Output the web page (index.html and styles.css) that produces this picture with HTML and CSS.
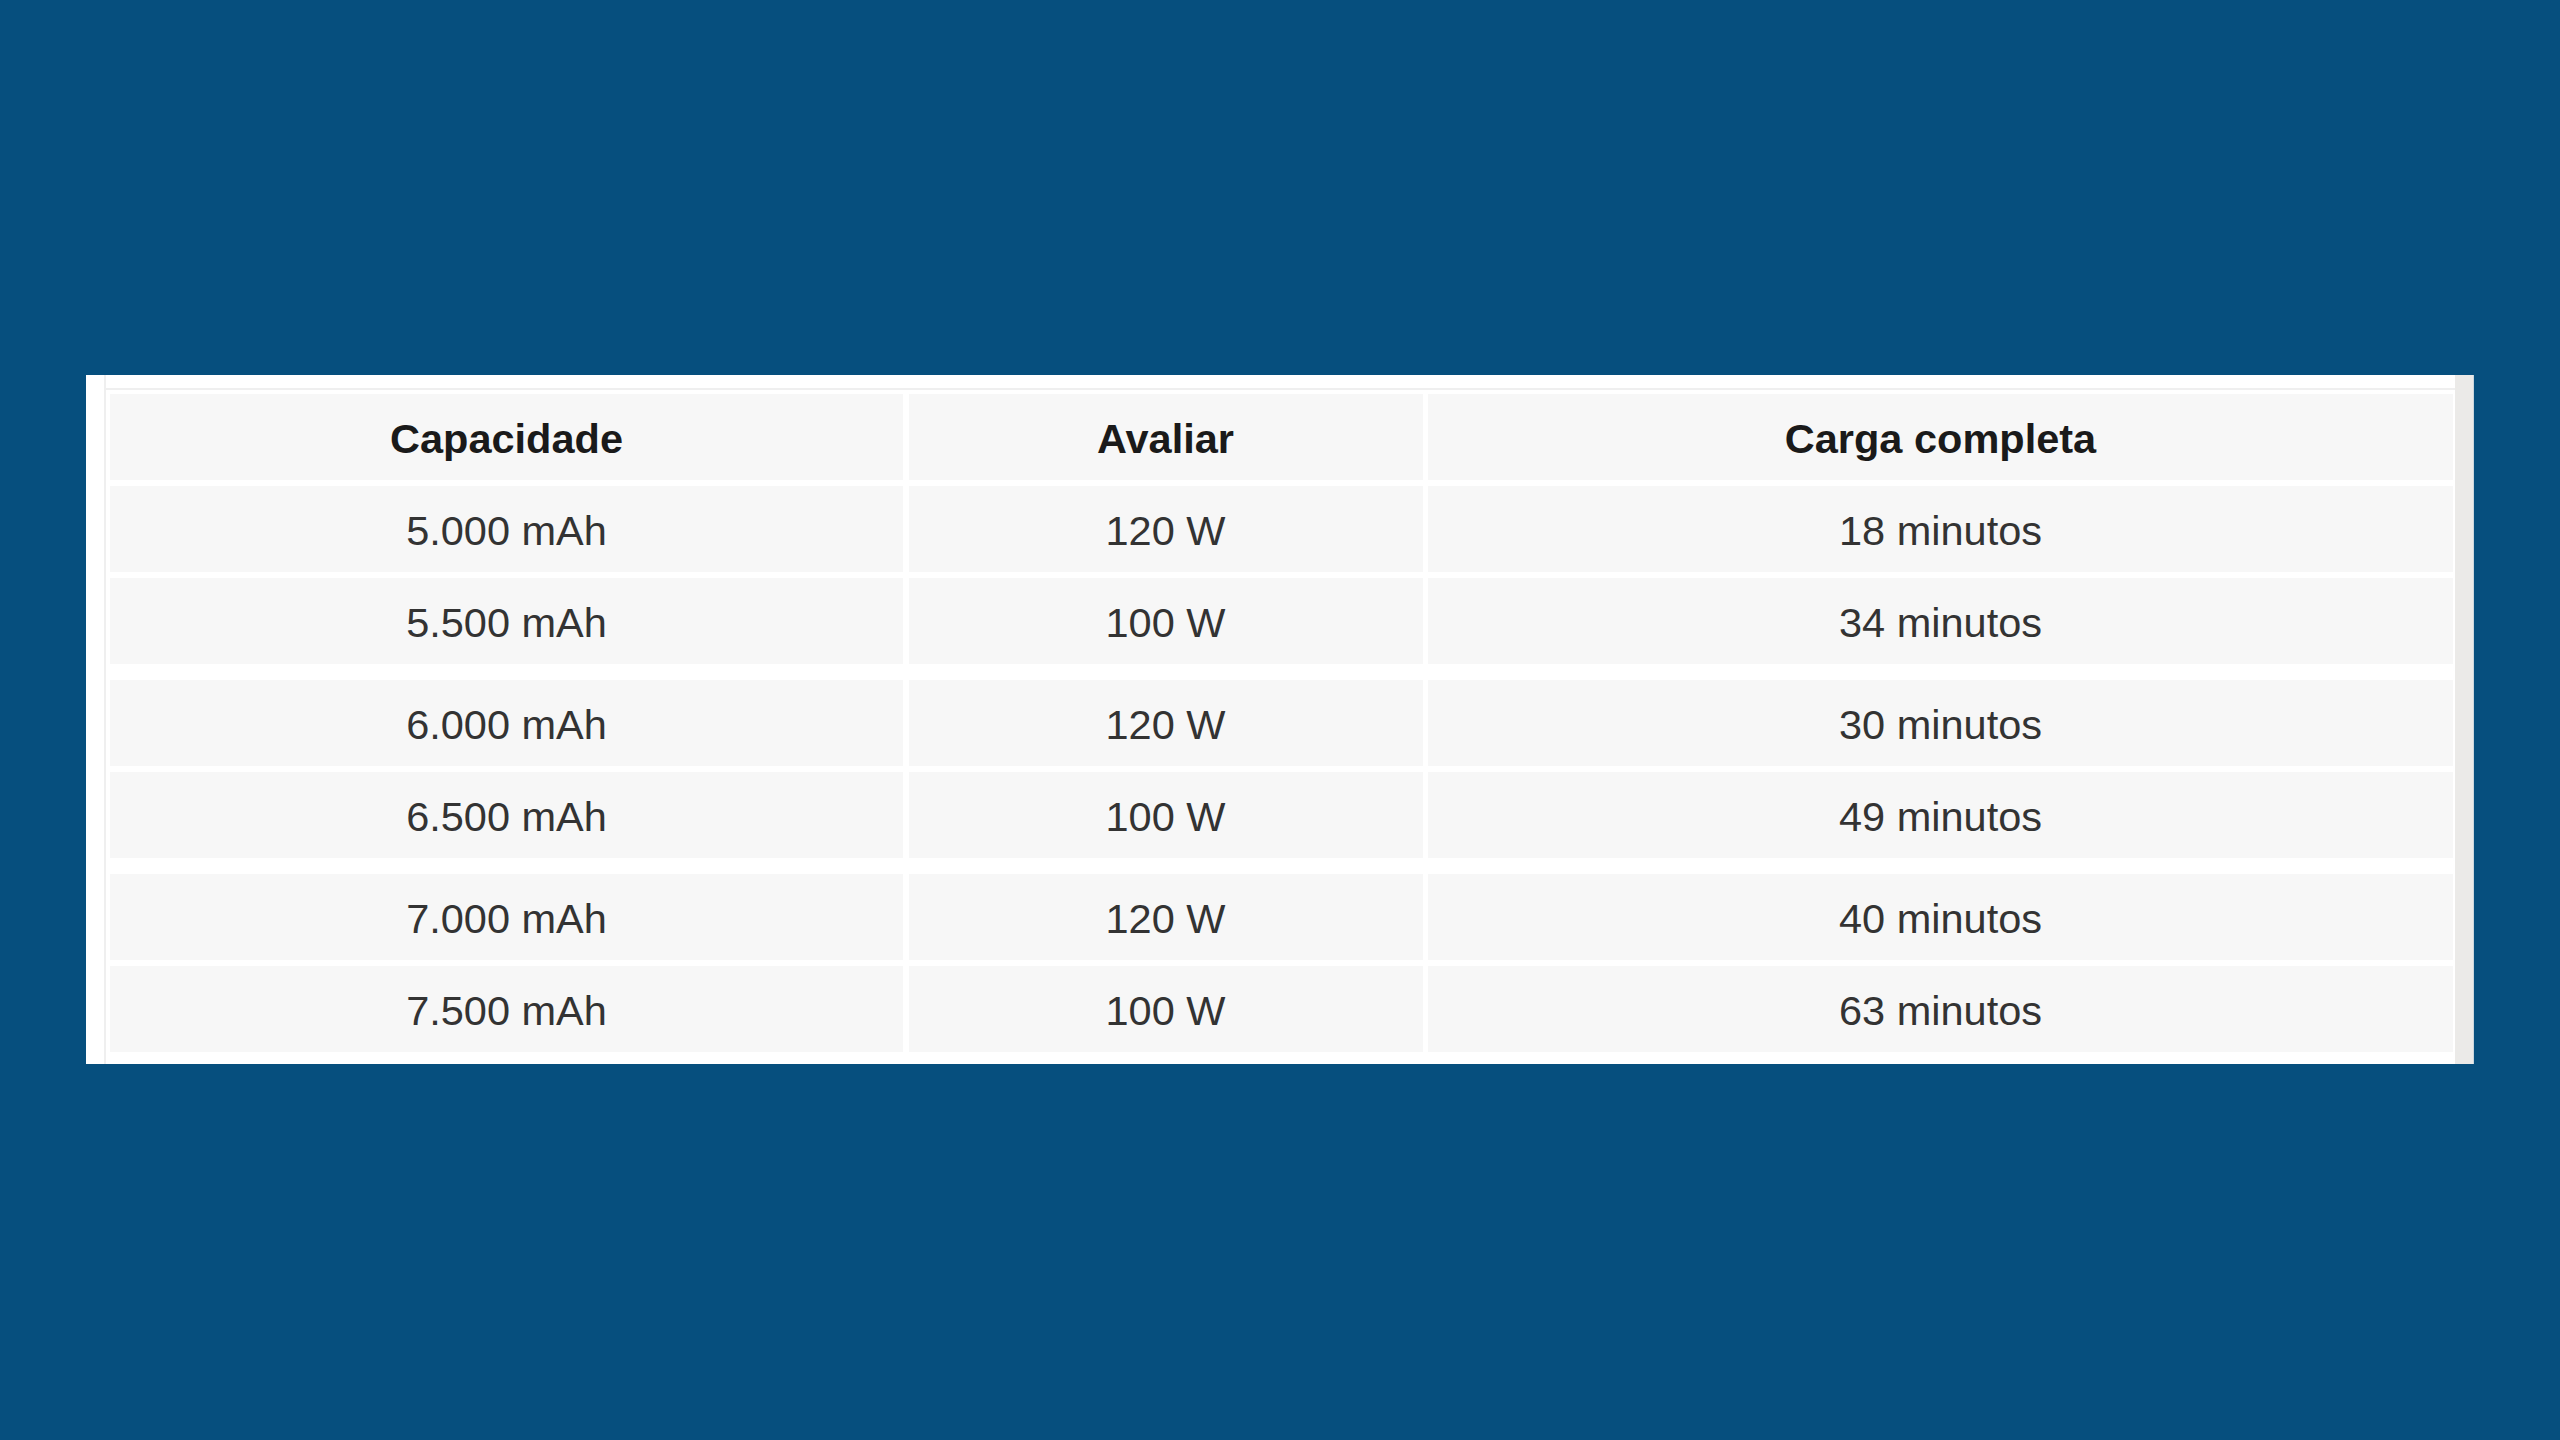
FILE: index.html
```html
<!DOCTYPE html>
<html lang="pt">
<head>
<meta charset="utf-8">
<title>Capacidade e carga</title>
<link rel="stylesheet" href="styles.css">
</head>
<body>
<div class="panel">
  <div class="view">
    <div class="frame">
      <div class="inner">
        <div class="table">
          <div class="row head">
            <div class="cell">Capacidade</div>
            <div class="cell">Avaliar</div>
            <div class="cell">Carga completa</div>
          </div>
          <div class="group">
            <div class="row">
              <div class="cell">5.000 mAh</div>
              <div class="cell">120 W</div>
              <div class="cell">18 minutos</div>
            </div>
            <div class="row">
              <div class="cell">5.500 mAh</div>
              <div class="cell">100 W</div>
              <div class="cell">34 minutos</div>
            </div>
          </div>
          <div class="group">
            <div class="row">
              <div class="cell">6.000 mAh</div>
              <div class="cell">120 W</div>
              <div class="cell">30 minutos</div>
            </div>
            <div class="row">
              <div class="cell">6.500 mAh</div>
              <div class="cell">100 W</div>
              <div class="cell">49 minutos</div>
            </div>
          </div>
          <div class="group">
            <div class="row">
              <div class="cell">7.000 mAh</div>
              <div class="cell">120 W</div>
              <div class="cell">40 minutos</div>
            </div>
            <div class="row">
              <div class="cell">7.500 mAh</div>
              <div class="cell">100 W</div>
              <div class="cell">63 minutos</div>
            </div>
          </div>
        </div>
      </div>
    </div>
  </div>
  <div class="scrollbar"></div>
</div>
</body>
</html>
```

FILE: styles.css
```css
html, body {
  margin: 0;
  padding: 0;
}
body {
  background: #064f7e;
  width: 2560px;
  height: 1440px;
  overflow: hidden;
  font-family: "Liberation Sans", Arial, sans-serif;
}
.panel {
  margin: 375px 0 0 86px;
  width: 2388px;
  height: 689px;
  background: #ffffff;
  display: flex;
}
.view {
  flex: 1;
  padding-left: 18px;
  display: flex;
}
.frame {
  flex: 1;
  border-left: 2px solid #efefef;
  padding-top: 13px;
}
.inner {
  border-top: 2px solid #efefef;
  padding: 4px 2px 0 4px;
}
.table {
  display: flex;
  flex-direction: column;
  gap: 16px;
}
.group {
  display: flex;
  flex-direction: column;
  gap: 6px;
}
.head {
  margin-bottom: -10px;
}
.row {
  display: grid;
  grid-template-columns: 793px 514px 1025px;
  column-gap: 5.5px;
  height: 86px;
}
.cell {
  background: #f7f7f7;
  display: flex;
  align-items: center;
  justify-content: center;
  padding-top: 3px;
  font-size: 41.5px;
  color: #333333;
}
.head .cell {
  font-weight: bold;
  color: #1a1a1a;
}
.scrollbar {
  width: 18px;
  background: #ebeae8;
  border-right: 1px solid #c9d6de;
}
```
